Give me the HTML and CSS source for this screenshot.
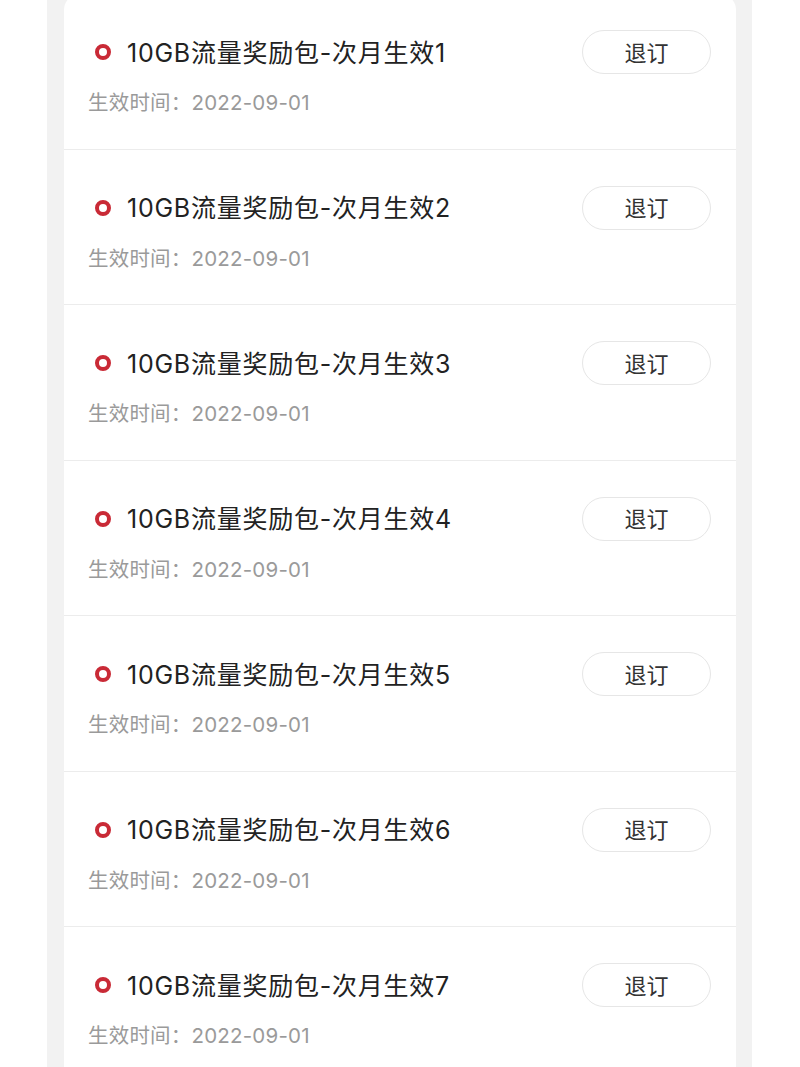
FILE: index.html
```html
<!DOCTYPE html>
<html lang="zh-CN">
<head>
<meta charset="UTF-8">
<meta name="viewport" content="width=device-width, initial-scale=1.0">
<title>已订购业务</title>
<link rel="stylesheet" href="styles.css">
</head>
<body>

<div class="page">
    <div class="card">
        <div class="item">
            <div class="item-head">
                <span class="dot"></span>
                <span class="name">10GB流量奖励包-次月生效1</span>
                <button class="cancel-btn">退订</button>
            </div>
            <div class="date">生效时间：2022-09-01</div>
        </div>
        <div class="item">
            <div class="item-head">
                <span class="dot"></span>
                <span class="name">10GB流量奖励包-次月生效2</span>
                <button class="cancel-btn">退订</button>
            </div>
            <div class="date">生效时间：2022-09-01</div>
        </div>
        <div class="item">
            <div class="item-head">
                <span class="dot"></span>
                <span class="name">10GB流量奖励包-次月生效3</span>
                <button class="cancel-btn">退订</button>
            </div>
            <div class="date">生效时间：2022-09-01</div>
        </div>
        <div class="item">
            <div class="item-head">
                <span class="dot"></span>
                <span class="name">10GB流量奖励包-次月生效4</span>
                <button class="cancel-btn">退订</button>
            </div>
            <div class="date">生效时间：2022-09-01</div>
        </div>
        <div class="item">
            <div class="item-head">
                <span class="dot"></span>
                <span class="name">10GB流量奖励包-次月生效5</span>
                <button class="cancel-btn">退订</button>
            </div>
            <div class="date">生效时间：2022-09-01</div>
        </div>
        <div class="item">
            <div class="item-head">
                <span class="dot"></span>
                <span class="name">10GB流量奖励包-次月生效6</span>
                <button class="cancel-btn">退订</button>
            </div>
            <div class="date">生效时间：2022-09-01</div>
        </div>
        <div class="item">
            <div class="item-head">
                <span class="dot"></span>
                <span class="name">10GB流量奖励包-次月生效7</span>
                <button class="cancel-btn">退订</button>
            </div>
            <div class="date">生效时间：2022-09-01</div>
        </div>
    </div>
</div>

</body>
</html>
```

FILE: styles.css
```css
body {
    margin: 0;
    background-color: #fff;
    font-family: Inter, "Noto Sans CJK SC", sans-serif;
    overflow: hidden;
}

.page {
    width: 705px;
    margin-left: 47px;
    padding: 0 16px 0 17px;
    box-sizing: border-box;
    background-color: #f2f2f2;
    min-height: 1067px;
}

.card {
    background: #fff;
    border-radius: 16px 16px 0 0;
    margin-top: -6px;
}

.item {
    height: 155.5px;
    box-sizing: border-box;
    padding: 36px 25px 0 24px;
    border-bottom: 1px solid #ececec;
}

.item-head {
    display: flex;
    align-items: center;
    height: 44px;
}

.dot {
    width: 8px;
    height: 8px;
    border: 4px solid #c92a36;
    border-radius: 50%;
    margin-left: 7px;
    margin-right: 16px;
    flex-shrink: 0;
}

.name {
    flex: 1;
    font-size: 25px;
    letter-spacing: 0.75px;
    color: #222;
    margin-top: -3px;
}

.cancel-btn {
    width: 129px;
    height: 44px;
    border: 1.5px solid #e6e6e6;
    border-radius: 22px;
    background: #fff;
    font-family: inherit;
    font-size: 22px;
    color: #333;
    padding: 0 0 3px;
}

.date {
    margin-top: 15px;
    line-height: 28px;
    font-size: 20.5px;
    letter-spacing: 0.2px;
    color: #9a9a9a;
}
```
